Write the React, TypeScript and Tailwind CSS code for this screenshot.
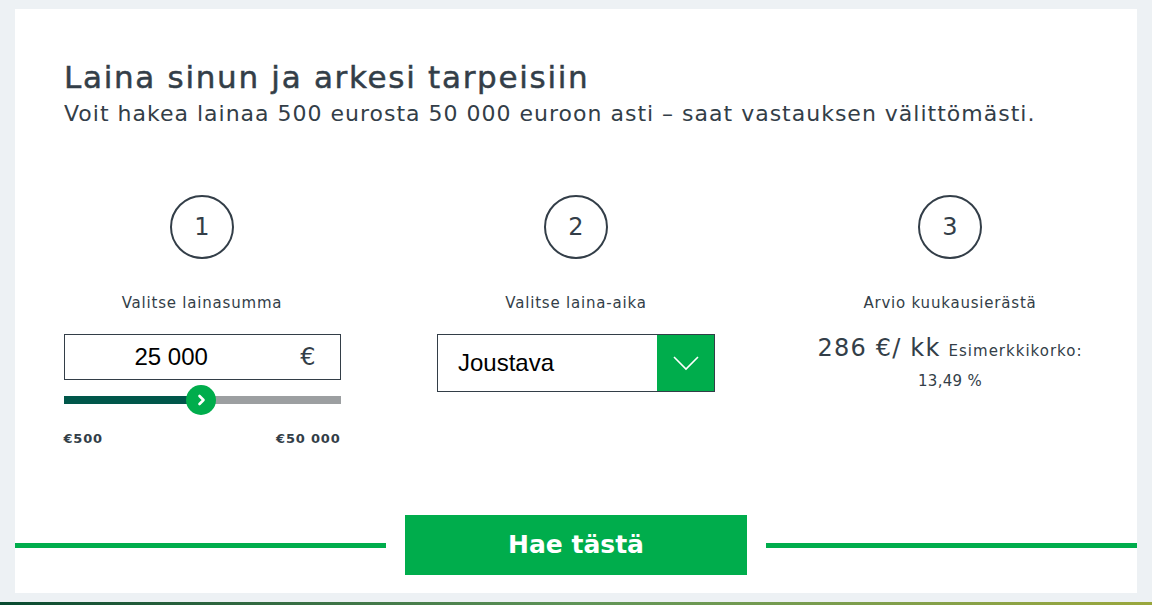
import React from "react";

const font = { fontFamily: "'DejaVu Sans', 'Noto Sans', sans-serif" };
const arial = { fontFamily: "'Liberation Sans', Arial, sans-serif" };

function Circle({ n }: { n: string }) {
  return (
    <div className="w-[64px] h-[64px] rounded-full border-2 border-[#333e48] flex items-center justify-center text-[24px] text-[#333e48] font-normal">
      {n}
    </div>
  );
}

export default function App() {
  return (
    <div className="w-[1152px] h-[605px] overflow-hidden bg-[#edf1f4] pt-[9px]" style={font}>
      <div className="mx-[15px] h-[584px] bg-white flex flex-col text-[#333e48]">
        <div className="pl-[49px] pt-[49px]">
          <h1 className="text-[31px] leading-[38px] font-normal tracking-[1.7px] [-webkit-text-stroke:0.5px_#333e48]">Laina sinun ja arkesi tarpeisiin</h1>
          <p className="mt-[3px] text-[22px] leading-[30px] font-normal tracking-[1px]">
            Voit hakea lainaa 500 eurosta 50 000 euroon asti – saat vastauksen välittömästi.
          </p>
        </div>
        <div className="grid grid-cols-3 mt-[66px]">
          <div className="flex flex-col items-center">
            <Circle n="1" />
            <div className="mt-[34px] text-[15px] leading-[20px] tracking-[0.8px]">Valitse lainasumma</div>
            <div className="mt-[21px] w-[277px] h-[46px] border border-[#333e48] flex items-center pl-[70px] pr-[24px] justify-between">
              <span className="text-[24px] text-black" style={arial}>25 000</span>
              <span className="text-[24px] text-[#333e48]">€</span>
            </div>
            <div className="relative w-[277px] h-[8px] mt-[16px] flex">
              <div className="w-[137px] h-full bg-[#00574a]" />
              <div className="flex-1 h-full bg-[#9c9fa1]" />
              <div className="absolute left-[122px] top-[-11px] w-[30px] h-[30px] rounded-full bg-[#00ad4c] flex items-center justify-center">
                <svg width="14" height="14" viewBox="0 0 14 14">
                  <path d="M5.5 3 L9.5 7 L5.5 11" stroke="white" strokeWidth="2.6" fill="none" strokeLinecap="round" strokeLinejoin="round" />
                </svg>
              </div>
            </div>
            <div className="w-[277px] flex justify-between mt-[27px] text-[13px] leading-[16px] font-bold tracking-[0.8px]">
              <span>€500</span>
              <span>€50 000</span>
            </div>
          </div>
          <div className="flex flex-col items-center">
            <Circle n="2" />
            <div className="mt-[34px] text-[15px] leading-[20px] tracking-[0.8px]">Valitse laina-aika</div>
            <div className="mt-[21px] w-[278px] h-[58px] border border-[#333e48] flex" style={arial}>
              <div className="flex-1 flex items-center pl-[20px] text-[24px] text-black">Joustava</div>
              <div className="w-[57px] h-full bg-[#00ad4c] flex items-center justify-center">
                <svg width="28" height="16" viewBox="0 0 28 16">
                  <path d="M2 2 L14 14 L26 2" stroke="white" strokeWidth="1.6" fill="none" />
                </svg>
              </div>
            </div>
          </div>
          <div className="flex flex-col items-center">
            <Circle n="3" />
            <div className="mt-[34px] text-[15px] leading-[20px] tracking-[0.8px]">Arvio kuukausierästä</div>
            <div className="mt-[20px] flex items-baseline gap-[8px]">
              <span className="text-[24px] leading-[30px] tracking-[1.2px]">286 €/ kk</span>
              <span className="text-[15px] tracking-[1px]">Esimerkkikorko:</span>
            </div>
            <div className="mt-[8px] text-[15px] leading-[20px] tracking-[0.3px]">13,49 %</div>
          </div>
        </div>
        <div className="flex-1" />
        <div className="flex items-center mb-[18px]">
          <div className="flex-1 h-[5px] bg-[#00ad4c]" />
          <div className="mx-[19px] w-[342px] h-[60px] bg-[#00ad4c] flex items-center justify-center text-white text-[25px] font-bold">
            Hae tästä
          </div>
          <div className="flex-1 h-[5px] bg-[#00ad4c]" />
        </div>
      </div>
      <div className="mt-[9px] h-[10px] bg-gradient-to-r from-[#074a30] via-[#5f9457] to-[#9aa73c]" />
    </div>
  );
}
